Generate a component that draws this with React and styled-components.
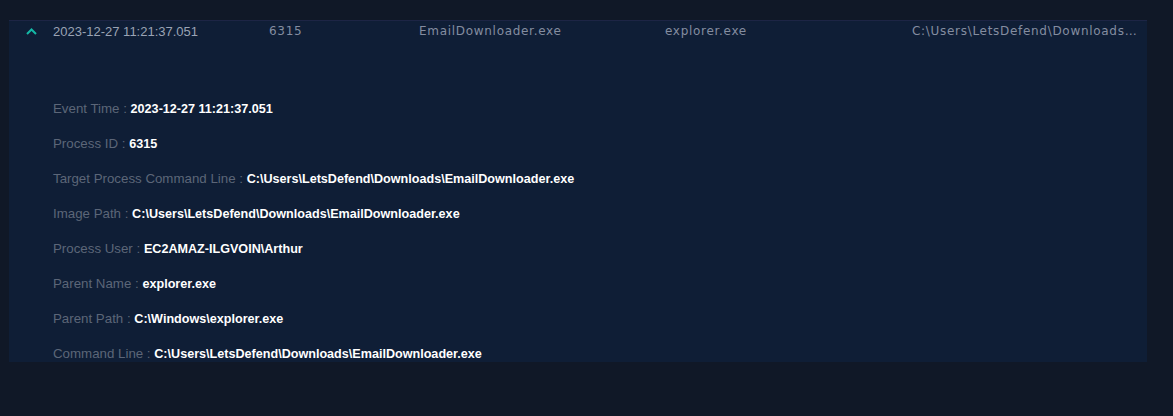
import React from "react";
import styled, { createGlobalStyle } from "styled-components";

const GlobalStyle = createGlobalStyle`
  html, body {
    margin: 0;
    padding: 0;
    background: #101827;
  }
  body {
    font-family: "Liberation Sans", Arial, sans-serif;
  }
`;

const Page = styled.div`
  width: 1173px;
  height: 416px;
  background: #101827;
  padding-top: 20px;
  box-sizing: border-box;
  overflow: hidden;
`;

const Panel = styled.div`
  margin-left: 9px;
  width: 1138px;
  background: #0f1e36;
  border-top: 1px solid #1d2545;
`;

const HeadRow = styled.div`
  display: grid;
  grid-template-columns: 44px 216px 150px 246px 247px 228px;
  align-items: center;
  height: 19px;
  padding-bottom: 2px;
`;

const Chevron = styled.div`
  display: flex;
  justify-content: flex-end;
  padding-right: 16px;
  padding-top: 2px;
  color: #14b8a6;
`;

const Cell = styled.div`
  font-family: ${(p) => (p.$plain ? '"Liberation Sans", Arial, sans-serif' : '"DejaVu Sans", sans-serif')};
  font-size: ${(p) => (p.$plain ? "13px" : "12px")};
  letter-spacing: ${(p) => (p.$plain ? "0" : "0.7px")};
  color: ${(p) => (p.$plain ? "#9aa3b4" : "#848da0")};
  white-space: nowrap;
  overflow: hidden;
  text-overflow: ellipsis;
  padding-top: ${(p) => (p.$plain ? "2px" : "0")};
`;

const Details = styled.div`
  display: flex;
  flex-direction: column;
  gap: 17px;
  padding: 57px 0 0 44px;
`;

const Line = styled.div`
  height: 18px;
  line-height: 18px;
  white-space: nowrap;
`;

const Label = styled.span`
  font-size: 13.3px;
  color: #5c6678;
`;

const Value = styled.span`
  font-size: 12.6px;
  color: #ffffff;
  font-weight: bold;
`;

const ChevronUp = () => (
  <svg width="11" height="7" viewBox="0 0 11 7" fill="none">
    <path d="M1 6 L5.5 1.5 L10 6" stroke="currentColor" strokeWidth="2" />
  </svg>
);

const details = [
  ["Event Time", "2023-12-27 11:21:37.051"],
  ["Process ID", "6315"],
  ["Target Process Command Line", "C:\\Users\\LetsDefend\\Downloads\\EmailDownloader.exe"],
  ["Image Path", "C:\\Users\\LetsDefend\\Downloads\\EmailDownloader.exe"],
  ["Process User", "EC2AMAZ-ILGVOIN\\Arthur"],
  ["Parent Name", "explorer.exe"],
  ["Parent Path", "C:\\Windows\\explorer.exe"],
  ["Command Line", "C:\\Users\\LetsDefend\\Downloads\\EmailDownloader.exe"],
];

const App = () => {
  return (
    <Page>
      <GlobalStyle />
      <Panel>
        <HeadRow>
          <Chevron>
            <ChevronUp />
          </Chevron>
          <Cell $plain>2023-12-27 11:21:37.051</Cell>
          <Cell>6315</Cell>
          <Cell>EmailDownloader.exe</Cell>
          <Cell>explorer.exe</Cell>
          <Cell>C:\Users\LetsDefend\Downloads\EmailDownloader.exe</Cell>
        </HeadRow>
        <Details>
          {details.map(([label, value]) => (
            <Line key={label}>
              <Label>{label} : </Label>
              <Value>{value}</Value>
            </Line>
          ))}
        </Details>
      </Panel>
    </Page>
  );
};

export default App;
